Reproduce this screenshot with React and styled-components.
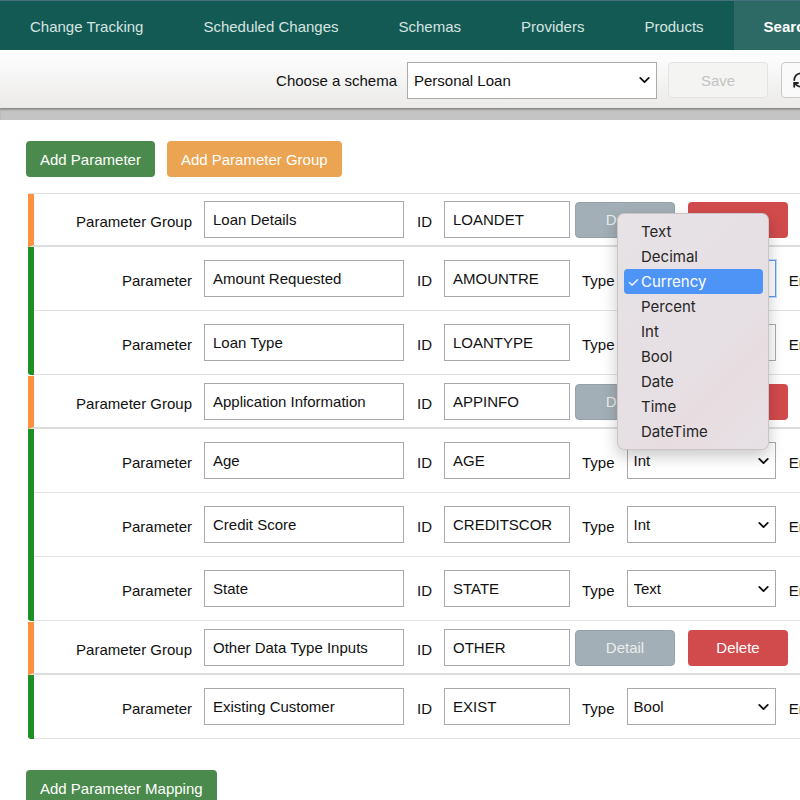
import React from "react";
import styled, { createGlobalStyle } from "styled-components";
import { ChevronDown, RefreshCw } from "lucide-react";

const GlobalStyle = createGlobalStyle`
  html, body {
    margin: 0;
    padding: 0;
    overflow: hidden;
    background: #fff;
  }
  body {
    font-family: "Liberation Sans", Arial, sans-serif;
    font-size: 15px;
    color: #111;
  }
`;

const Page = styled.div`
  position: relative;
  width: 840px;
  min-height: 800px;
`;

const Nav = styled.nav`
  display: flex;
  height: 50px;
  padding-top: 2px;
  background: #135a54;
  border-top: 1px solid #45707c;
  box-sizing: border-box;
`;

const NavItem = styled.div`
  display: flex;
  align-items: center;
  padding: 0 30px;
  margin-top: ${(p) => (p.active ? "-2px" : "0")};
  padding-top: ${(p) => (p.active ? "2px" : "0")};
  color: ${(p) => (p.active ? "#fff" : "#d6e4e1")};
  font-weight: ${(p) => (p.active ? "bold" : "normal")};
  background: ${(p) => (p.active ? "#2d6a65" : "transparent")};
  white-space: nowrap;
`;

const Toolbar = styled.div`
  display: flex;
  align-items: center;
  justify-content: flex-end;
  height: 58px;
  box-sizing: border-box;
  padding: 2px 19px 0 0;
  background: linear-gradient(#ffffff, #ebeae9);
  position: relative;
  z-index: 1;
  box-shadow: 0 1px 2px rgba(0, 0, 0, 0.25);
`;

const ToolbarLabel = styled.span`
  margin-right: 10px;
`;

const SelectWrap = styled.div`
  position: relative;
  display: flex;
  width: ${(p) => p.width}px;
`;

const NativeSelect = styled.select`
  appearance: none;
  width: 100%;
  height: ${(p) => p.h || 37}px;
  box-sizing: border-box;
  border: 1px solid ${(p) => (p.focused ? "#5e9cf2" : "#aaa")};
  box-shadow: ${(p) => (p.focused ? "0 0 0 1px rgba(94,156,242,0.35)" : "none")};
  border-radius: 0;
  background: #fff;
  padding: 0 30px 0 6px;
  font-family: "Liberation Sans", Arial, sans-serif;
  font-size: 15px;
  color: #111;
  outline: none;
`;

const Chevron = styled(ChevronDown)`
  position: absolute;
  right: 4px;
  top: 50%;
  transform: translateY(-50%);
  pointer-events: none;
  color: #111;
`;

const SaveButton = styled.button`
  margin-left: 11px;
  width: 100px;
  height: 36px;
  border: 1px solid #e3e3e3;
  border-radius: 4px;
  background: #f4f4f3;
  color: #c3c3c3;
  font-family: "Liberation Sans", Arial, sans-serif;
  font-size: 15px;
`;

const RefreshButton = styled.button`
  margin-left: 13px;
  width: 40px;
  height: 36px;
  display: flex;
  align-items: center;
  justify-content: center;
  border: 1px solid #c9c9c9;
  border-radius: 4px;
  background: #fafafa;
  color: #222;
`;

const ShadowBand = styled.div`
  height: 12px;
  background: #c4c4c4;
  box-shadow: inset 0 2px 2px rgba(0, 0, 0, 0.15);
`;

const Content = styled.div`
  padding: 21px 0 0 26px;
`;

const ButtonRow = styled.div`
  display: flex;
  gap: 12px;
`;

const Button = styled.button`
  height: 36px;
  padding: 0 14px;
  border: none;
  border-radius: 4px;
  background: ${(p) => p.bg};
  color: ${(p) => p.fg || "#fff"};
  font-family: "Liberation Sans", Arial, sans-serif;
  font-size: 15px;
  white-space: nowrap;
`;

const ActionButton = styled(Button)`
  width: 100px;
  padding: 0;
  margin-left: ${(p) => p.ml}px;
  flex-shrink: 0;
  ${(p) => (p.outlined ? "border: 1px solid #95a2a9;" : "")}
`;

const List = styled.div`
  margin: 16px 0 0 2px;
  border-top: 1px solid #e2e2e2;
`;

const GroupRow = styled.div`
  display: flex;
  align-items: center;
  height: 51px;
  border-left: 6px solid #fd913f;
  border-bottom: 2px solid #dddddd;
`;

const ParamList = styled.div`
  border-left: 6px solid #1d8f24;
  border-bottom-left-radius: 3px;
  margin-bottom: 1px;
`;

const ParamRow = styled.div`
  display: flex;
  align-items: center;
  height: 63px;
  border-bottom: 1px solid #e2e2e2;
`;

const RowLabel = styled.span`
  width: 158px;
  flex-shrink: 0;
  text-align: right;
  margin-right: 12px;
  padding-top: 3px;
`;

const FieldLabel = styled.span`
  margin: 0 ${(p) => p.mr || 12}px 0 ${(p) => p.ml || 13}px;
  padding-top: 3px;
  white-space: nowrap;
`;

const TextInput = styled.input`
  width: ${(p) => p.width}px;
  height: 37px;
  box-sizing: border-box;
  flex-shrink: 0;
  border: 1px solid #aaa;
  border-radius: 0;
  padding: 0 8px;
  font-family: "Liberation Sans", Arial, sans-serif;
  font-size: 15px;
  color: #111;
  outline: none;
`;

const Menu = styled.div`
  position: absolute;
  left: 617px;
  top: 213px;
  width: 152px;
  box-sizing: border-box;
  padding: 5px 5px 5px 6px;
  background: linear-gradient(135deg, #e6e2e6 0%, #e6dfe3 60%, #e8dde1 75%, #e6e1e5 100%);
  border: 1px solid rgba(0, 0, 0, 0.12);
  border-radius: 7px;
  box-shadow: 0 6px 16px rgba(0, 0, 0, 0.22);
  z-index: 5;
`;

const MenuItem = styled.div`
  position: relative;
  height: 25px;
  line-height: 25px;
  padding-left: 17px;
  border-radius: 4px;
  font-family: Inter, "Noto Sans", sans-serif;
  font-size: 15px;
  color: ${(p) => (p.selected ? "#fff" : "#262626")};
  background: ${(p) => (p.selected ? "#4e93f6" : "transparent")};
`;

const Check = styled.span`
  position: absolute;
  left: 3px;
  top: 0;
  font-size: 14px;
`;

const BottomButton = styled(Button)`
  margin-top: 30px;
`;

const navItems = ["Change Tracking", "Scheduled Changes", "Schemas", "Providers", "Products", "Search"];

const groups = [
  {
    name: "Loan Details",
    id: "LOANDET",
    params: [
      { name: "Amount Requested", id: "AMOUNTRE", type: "Currency", focused: true },
      { name: "Loan Type", id: "LOANTYPE", type: "Text" },
    ],
  },
  {
    name: "Application Information",
    id: "APPINFO",
    params: [
      { name: "Age", id: "AGE", type: "Int" },
      { name: "Credit Score", id: "CREDITSCOR", type: "Int" },
      { name: "State", id: "STATE", type: "Text" },
    ],
  },
  {
    name: "Other Data Type Inputs",
    id: "OTHER",
    params: [{ name: "Existing Customer", id: "EXIST", type: "Bool" }],
  },
];

const types = ["Text", "Decimal", "Currency", "Percent", "Int", "Bool", "Date", "Time", "DateTime"];

const TypeSelect = ({ value, focused }) => (
  <SelectWrap width={150}>
    <NativeSelect value={value} focused={focused} onChange={() => {}}>
      {types.map((t) => (
        <option key={t}>{t}</option>
      ))}
    </NativeSelect>
    <Chevron size={17} strokeWidth={2.6} />
  </SelectWrap>
);

const App = () => {
  return (
    <Page>
      <GlobalStyle />
      <Nav>
        {navItems.map((item) => (
          <NavItem key={item} active={item === "Search"}>
            {item}
          </NavItem>
        ))}
      </Nav>

      <Toolbar>
        <ToolbarLabel>Choose a schema</ToolbarLabel>
        <SelectWrap width={250}>
          <NativeSelect h={37} value="Personal Loan" onChange={() => {}}>
            <option>Personal Loan</option>
          </NativeSelect>
          <Chevron size={17} strokeWidth={2.6} />
        </SelectWrap>
        <SaveButton disabled>Save</SaveButton>
        <RefreshButton>
          <RefreshCw size={18} strokeWidth={2.4} />
        </RefreshButton>
      </Toolbar>
      <ShadowBand />

      <Content>
        <ButtonRow>
          <Button bg="#4a8a4c">Add Parameter</Button>
          <Button bg="#eba451">Add Parameter Group</Button>
        </ButtonRow>

        <List>
          {groups.map((g) => (
            <div key={g.id}>
              <GroupRow>
                <RowLabel>Parameter Group</RowLabel>
                <TextInput width={200} defaultValue={g.name} />
                <FieldLabel>ID</FieldLabel>
                <TextInput width={126} defaultValue={g.id} />
                <ActionButton ml={5} bg="#a3afb6" fg="#e9edef" outlined>
                  Detail
                </ActionButton>
                <ActionButton ml={13} bg="#d24b4c">
                  Delete
                </ActionButton>
              </GroupRow>
              <ParamList>
                {g.params.map((p) => (
                  <ParamRow key={p.id}>
                    <RowLabel>Parameter</RowLabel>
                    <TextInput width={200} defaultValue={p.name} />
                    <FieldLabel>ID</FieldLabel>
                    <TextInput width={126} defaultValue={p.id} />
                    <FieldLabel ml={12} mr={12}>
                      Type
                    </FieldLabel>
                    <TypeSelect value={p.type} focused={p.focused} />
                    <FieldLabel>Enum</FieldLabel>
                  </ParamRow>
                ))}
              </ParamList>
            </div>
          ))}
        </List>

        <BottomButton bg="#4a8a4c">Add Parameter Mapping</BottomButton>
      </Content>

      <Menu>
        {types.map((t) => (
          <MenuItem key={t} selected={t === "Currency"}>
            {t === "Currency" && <Check>✓</Check>}
            {t}
          </MenuItem>
        ))}
      </Menu>
    </Page>
  );
};

export default App;
